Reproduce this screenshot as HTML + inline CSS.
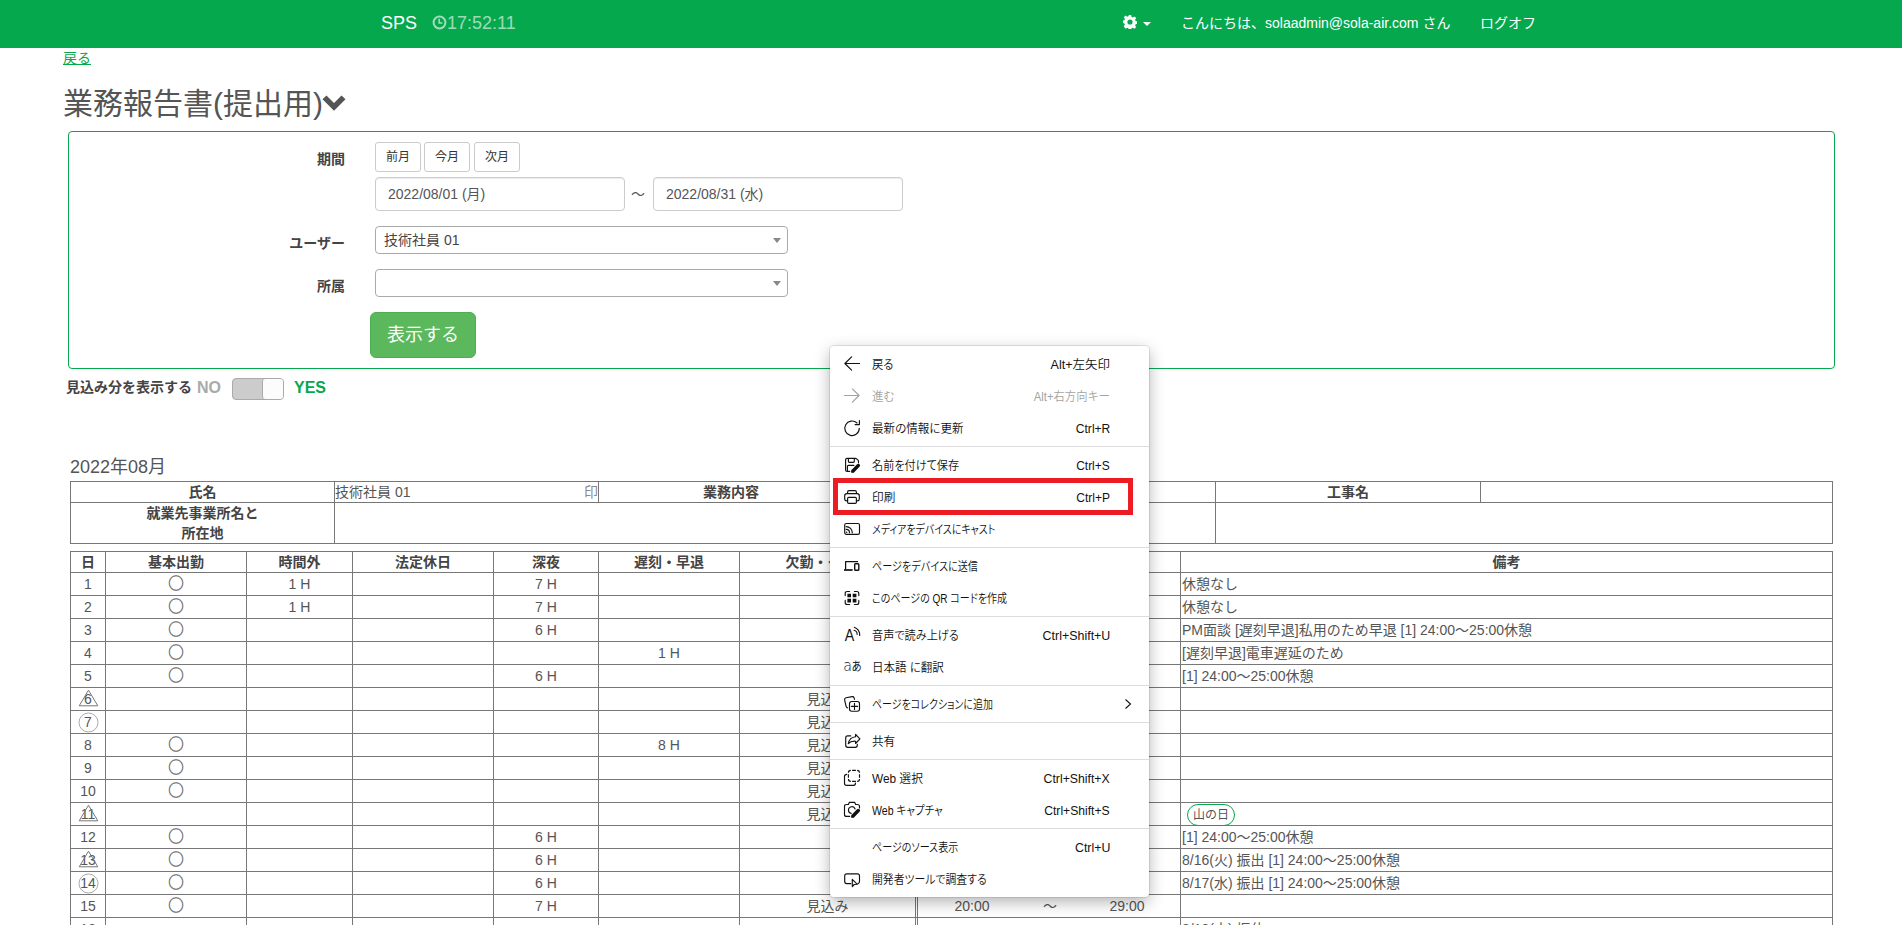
<!DOCTYPE html>
<html lang="ja">
<head>
<meta charset="utf-8">
<title>業務報告書(提出用)</title>
<style>
*{box-sizing:border-box}
html,body{margin:0;padding:0}
body{width:1902px;height:925px;overflow:hidden;position:relative;background:#fff;color:#555;
  font-family:"Liberation Sans","Noto Sans CJK JP",sans-serif;font-size:14px;line-height:20px}
.abs{position:absolute}
/* ---------- navbar ---------- */
#nav{position:absolute;left:0;top:0;width:1902px;height:48px;background:#06a84e}
#nav .brand{position:absolute;left:381px;top:13px;font-size:18px;line-height:20px;color:#fff}
#nav .clock{position:absolute;left:432px;top:15px;width:15px;height:15px}
#nav .time{position:absolute;left:447px;top:13px;font-size:18px;line-height:20px;color:rgba(255,255,255,.62)}
#nav .gear{position:absolute;left:1123px;top:15px;width:14px;height:14px}
#nav .caret{position:absolute;left:1143px;top:22px;width:0;height:0;border-top:4px solid #fff;border-left:4px solid transparent;border-right:4px solid transparent}
#nav .hello{position:absolute;left:1181px;top:13px;color:#fff;white-space:nowrap}
#nav .logoff{position:absolute;left:1480px;top:13px;color:#fff;white-space:nowrap}
/* ---------- heading ---------- */
#back{position:absolute;left:63px;top:48px;color:#06a84e;text-decoration:underline}
#title{position:absolute;left:63px;top:87px;margin:0;font-size:30px;line-height:33px;font-weight:normal;color:#555;white-space:nowrap}
#title svg{position:absolute;left:259px;top:7px}
/* ---------- search panel ---------- */
#panel{position:absolute;left:68px;top:131px;width:1767px;height:238px;border:1px solid #06a84e;border-radius:4px}
.lbl{position:absolute;width:120px;text-align:right;font-weight:bold;color:#444}
.btn-sm{position:absolute;top:142px;width:46px;height:30px;border:1px solid #ccc;border-radius:3px;background:#fff;color:#333;font-size:12px;line-height:28px;text-align:center}
.inp{position:absolute;top:177px;width:250px;height:34px;border:1px solid #ccc;border-radius:4px;background:#fff;padding:6px 12px;color:#555;line-height:20px;box-shadow:inset 0 1px 1px rgba(0,0,0,.075)}
.sel{position:absolute;left:375px;width:413px;height:28px;border:1px solid #aaa;border-radius:4px;background:#fff;padding-left:8px;line-height:26px;color:#444}
.sel i{position:absolute;right:6px;top:11px;width:0;height:0;border-top:5px solid #888;border-left:4px solid transparent;border-right:4px solid transparent}
#show{position:absolute;left:370px;top:312px;width:106px;height:46px;border:1px solid #4cae4c;border-radius:6px;background:#5cb85c;color:#fff;font-size:18px;line-height:44px;text-align:center}
/* ---------- toggle ---------- */
#tg-l{position:absolute;left:66px;top:377px;font-weight:bold;color:#444;white-space:nowrap}
#tg-no{position:absolute;left:197px;top:378px;font-weight:bold;font-size:16px;color:#aaa}
#tg-yes{position:absolute;left:294px;top:378px;font-weight:bold;font-size:16px;color:#06a84e}
#tg{position:absolute;left:232px;top:378px;width:52px;height:22px;border:1px solid #aaa;border-radius:4px;background:#ccc}
#tg b{position:absolute;right:0;top:0;width:21px;height:20px;background:#fcfcfc;border-left:1px solid #aaa;border-radius:3px}
/* ---------- tables ---------- */
#ym{position:absolute;left:70px;top:457px;font-size:18px;line-height:20px;color:#555;white-space:nowrap}
table{position:absolute;left:70px;width:1763px;border-collapse:separate;border-spacing:0;table-layout:fixed;border-right:1px solid #777;border-bottom:1px solid #777;color:#555}
th,td{border-left:1px solid #777;border-top:1px solid #777;padding:0;text-align:center;vertical-align:middle;line-height:20px;white-space:nowrap;overflow:hidden}
th{font-weight:bold;color:#444}
#t1{top:481px}
#t1 .r1 th,#t1 .r1 td{height:21px}
#t1 .r2 th,#t1 .r2 td{height:41px}
#t1 .nm{text-align:left;position:relative}
#t1 .in{position:absolute;right:0;top:0;color:#8a8a8a}
#t2{top:551px}
#t2 th{height:21px}
#t2 td{height:23px;line-height:21px;vertical-align:top;padding-top:1px}
#t2 .dbl{border-left:3px double #777}
#t2 .nb{border-left:0}
#t2 td.rm{text-align:left;padding-left:1px;position:relative;overflow:visible}
#t2 td.d{position:relative;overflow:visible}
#t2 .o{font-family:"Noto Sans CJK JP",sans-serif;font-size:15.5px;line-height:21px;height:21px;display:block;overflow:hidden;color:#666;-webkit-text-stroke:.35px #666;font-weight:400;position:relative;top:-2px}
.mk{position:absolute}
.mk.tri{left:6.5px;top:.5px;width:21px;height:18px}
.mk.cir{left:6.5px;top:.5px;width:21px;height:21px}
.hol{position:absolute;left:6px;top:1px;width:48px;height:22px;line-height:21px;z-index:2;border:1px solid #06a84e;border-radius:11px;text-align:center;font-size:12px}
/* ---------- context menu ---------- */
#menu{position:absolute;left:830px;top:346px;width:319px;height:551px;background:#fff;border-radius:4px;
  box-shadow:0 0 0 1px rgba(0,0,0,.09),0 5px 16px 0 rgba(0,0,0,.30);font-size:12px;line-height:32px;color:#111;
  font-family:"Liberation Sans","Noto Sans CJK JP",sans-serif}
#menu .mi{position:absolute;left:0;width:319px;height:32px;white-space:nowrap}
#menu .dis{color:#a3a3a3}
#menu .ic{position:absolute;left:14px;top:8px;width:16px;height:16px;overflow:visible}
#menu .ml{position:absolute;left:42px;top:1px;font-weight:350;transform-origin:0 50%;font-feature-settings:"palt"}
#menu .ms{position:absolute;right:39px;top:1px;font-weight:350;transform-origin:100% 50%}
#menu .chev{position:absolute;left:294px;top:10px;width:8px;height:12px}
#menu .sep{position:absolute;left:0;width:319px;height:1px;background:#dcdcdc}
#red{position:absolute;left:833px;top:478px;width:300px;height:37px;border:5px solid #ed1c24}
</style>
</head>
<body>
<div id="nav">
  <span class="brand">SPS</span>
  <svg class="clock" viewBox="0 0 15 15"><circle cx="7.5" cy="7.5" r="5.9" fill="none" stroke="rgba(255,255,255,.62)" stroke-width="2"/><path d="M7.2 3.8v4.200h3.200" fill="none" stroke="rgba(255,255,255,.62)" stroke-width="1.600"/></svg>
  <span class="time">17:52:11</span>
  <svg class="gear" viewBox="0 0 14 14"><path fill="#fff" fill-rule="evenodd" d="M5.8 0h2.4l.4 2 1.2.5 1.7-1.1 1.7 1.7-1.1 1.7.5 1.2 2 .4v2.4l-2 .4-.5 1.2 1.1 1.7-1.7 1.7-1.7-1.1-1.2.5-.4 2H5.8l-.4-2-1.2-.5-1.7 1.1L.8 11.300l1.100-1.700-.5-1.200-2-.4V5.600l2-.4.5-1.200L.8 2.300 2.500.6l1.700 1.100 1.200-.5zM7 4.400a2.600 2.600 0 1 0 0 5.200 2.600 2.600 0 0 0 0-5.200z"/></svg>
  <i class="caret"></i>
  <span class="hello">こんにちは、solaadmin@sola-air.com さん</span>
  <span class="logoff">ログオフ</span>
</div>

<a id="back">戻る</a>
<h2 id="title">業務報告書(提出用)<svg width="24" height="20" viewBox="0 0 24 20"><path d="M.5 5.250 4.500 1.400 12 9.050 19.500 1.400 23.500 5.250 12 16.800z" fill="#555"/></svg></h2>

<div id="panel"></div>
<div class="lbl" style="left:225px;top:149px">期間</div>
<div class="btn-sm" style="left:375px">前月</div>
<div class="btn-sm" style="left:424px">今月</div>
<div class="btn-sm" style="left:474px">次月</div>
<div class="inp" style="left:375px">2022/08/01 (月)</div>
<div class="abs" style="left:631px;top:184px">～</div>
<div class="inp" style="left:653px">2022/08/31 (水)</div>
<div class="lbl" style="left:225px;top:233px">ユーザー</div>
<div class="sel" style="top:226px">技術社員 01<i></i></div>
<div class="lbl" style="left:225px;top:276px">所属</div>
<div class="sel" style="top:269px"><i></i></div>
<div id="show">表示する</div>

<div id="tg-l">見込み分を表示する</div>
<div id="tg-no">NO</div>
<div id="tg"><b></b></div>
<div id="tg-yes">YES</div>

<!--TABLES-->
<div id="ym">2022年08月</div>
<table id="t1"><colgroup><col style="width:264px"><col style="width:264px"><col style="width:265px"><col style="width:352px"><col style="width:265px"><col style="width:352px"></colgroup>
<tr class="r1"><th>氏名</th><td class="nm">技術社員 01<span class="in">印</span></td><th>業務内容</th><td></td><th>工事名</th><td></td></tr>
<tr class="r2"><th>就業先事業所名と<br>所在地</th><td colspan="3"></td><td colspan="2"></td></tr>
</table>
<table id="t2"><colgroup><col style="width:35px"><col style="width:141px"><col style="width:106px"><col style="width:141px"><col style="width:105px"><col style="width:141px"><col style="width:176px"><col style="width:111px"><col style="width:48px"><col style="width:106px"><col style="width:652px"></colgroup>
<tr class="h"><th>日</th><th>基本出勤</th><th>時間外</th><th>法定休日</th><th>深夜</th><th>遅刻・早退</th><th>欠勤・その他</th><th class="dbl" colspan="3">勤務時間</th><th class="rm">備考</th></tr>
<tr><td class="d">1</td><td><span class="o">○</span></td><td>1 H</td><td></td><td>7 H</td><td></td><td></td><td class="dbl">20:00</td><td class="nb">～</td><td class="nb">29:00</td><td class="rm">休憩なし</td></tr>
<tr><td class="d">2</td><td><span class="o">○</span></td><td>1 H</td><td></td><td>7 H</td><td></td><td></td><td class="dbl">20:00</td><td class="nb">～</td><td class="nb">29:00</td><td class="rm">休憩なし</td></tr>
<tr><td class="d">3</td><td><span class="o">○</span></td><td></td><td></td><td>6 H</td><td></td><td></td><td class="dbl">20:00</td><td class="nb">～</td><td class="nb">28:00</td><td class="rm">PM面談 [遅刻早退]私用のため早退 [1] 24:00～25:00休憩</td></tr>
<tr><td class="d">4</td><td><span class="o">○</span></td><td></td><td></td><td></td><td>1 H</td><td></td><td class="dbl">10:00</td><td class="nb">～</td><td class="nb">18:00</td><td class="rm">[遅刻早退]電車遅延のため</td></tr>
<tr><td class="d">5</td><td><span class="o">○</span></td><td></td><td></td><td>6 H</td><td></td><td></td><td class="dbl">20:00</td><td class="nb">～</td><td class="nb">29:00</td><td class="rm">[1] 24:00～25:00休憩</td></tr>
<tr><td class="d"><svg class="mk tri" viewBox="0 0 21 18"><path d="M10.5 1.200 1.200 16.800h18.600z" fill="none" stroke="#777" stroke-width="1"/></svg>6</td><td></td><td></td><td></td><td></td><td></td><td>見込み</td><td class="dbl"></td><td class="nb"></td><td class="nb"></td><td class="rm"></td></tr>
<tr><td class="d"><svg class="mk cir" viewBox="0 0 21 21"><circle cx="10.500" cy="10.500" r="9.500" fill="none" stroke="#aaa" stroke-width="1"/></svg>7</td><td></td><td></td><td></td><td></td><td></td><td>見込み</td><td class="dbl"></td><td class="nb"></td><td class="nb"></td><td class="rm"></td></tr>
<tr><td class="d">8</td><td><span class="o">○</span></td><td></td><td></td><td></td><td>8 H</td><td>見込み</td><td class="dbl"></td><td class="nb"></td><td class="nb"></td><td class="rm"></td></tr>
<tr><td class="d">9</td><td><span class="o">○</span></td><td></td><td></td><td></td><td></td><td>見込み</td><td class="dbl"></td><td class="nb"></td><td class="nb"></td><td class="rm"></td></tr>
<tr><td class="d">10</td><td><span class="o">○</span></td><td></td><td></td><td></td><td></td><td>見込み</td><td class="dbl"></td><td class="nb"></td><td class="nb"></td><td class="rm"></td></tr>
<tr><td class="d"><svg class="mk tri" viewBox="0 0 21 18"><path d="M10.5 1.200 1.200 16.800h18.600z" fill="none" stroke="#777" stroke-width="1"/></svg>11</td><td></td><td></td><td></td><td></td><td></td><td>見込み</td><td class="dbl"></td><td class="nb"></td><td class="nb"></td><td class="rm"><span class="hol">山の日</span></td></tr>
<tr><td class="d">12</td><td><span class="o">○</span></td><td></td><td></td><td>6 H</td><td></td><td></td><td class="dbl">20:00</td><td class="nb">～</td><td class="nb">29:00</td><td class="rm">[1] 24:00～25:00休憩</td></tr>
<tr><td class="d"><svg class="mk tri" viewBox="0 0 21 18"><path d="M10.5 1.200 1.200 16.800h18.600z" fill="none" stroke="#777" stroke-width="1"/></svg>13</td><td><span class="o">○</span></td><td></td><td></td><td>6 H</td><td></td><td></td><td class="dbl">20:00</td><td class="nb">～</td><td class="nb">29:00</td><td class="rm">8/16(火) 振出 [1] 24:00～25:00休憩</td></tr>
<tr><td class="d"><svg class="mk cir" viewBox="0 0 21 21"><circle cx="10.500" cy="10.500" r="9.500" fill="none" stroke="#aaa" stroke-width="1"/></svg>14</td><td><span class="o">○</span></td><td></td><td></td><td>6 H</td><td></td><td></td><td class="dbl">20:00</td><td class="nb">～</td><td class="nb">29:00</td><td class="rm">8/17(水) 振出 [1] 24:00～25:00休憩</td></tr>
<tr><td class="d">15</td><td><span class="o">○</span></td><td></td><td></td><td>7 H</td><td></td><td>見込み</td><td class="dbl">20:00</td><td class="nb">～</td><td class="nb">29:00</td><td class="rm"></td></tr>
<tr><td class="d">16</td><td></td><td></td><td></td><td></td><td></td><td></td><td class="dbl"></td><td class="nb"></td><td class="nb"></td><td class="rm">8/13(土) 振休</td></tr>
</table>
<!--/TABLES-->
<!--MENU-->
<div id="menu">
<div class="mi" style="top:2px">
<svg class="ic" viewBox="0 0 16 16"><path fill="none" stroke="#111" stroke-width="1.15" stroke-linecap="round" stroke-linejoin="round" d="M15.600 7.500H0.900M7.600 0.800 0.900 7.500l6.700 6.700"/></svg>
<span class="ml" id="l0" style="transform:scaleX(0.9435)">戻る</span>
<span class="ms" id="s0" style="transform:scaleX(1.0421)">Alt+左矢印</span>
</div>
<div class="mi dis" style="top:34px">
<svg class="ic" viewBox="0 0 16 16"><path fill="none" stroke="#a3a3a3" stroke-width="1.15" stroke-linecap="round" stroke-linejoin="round" d="M0.400 7.500h14.700M8.400 0.800l6.700 6.700-6.700 6.700"/></svg>
<span class="ml" id="l1" style="transform:scaleX(0.9565)">進む</span>
<span class="ms" id="s1" style="transform:scaleX(0.9407)">Alt+右方向キー</span>
</div>
<div class="mi" style="top:66px">
<svg class="ic" viewBox="0 0 16 16"><path fill="none" stroke="#111" stroke-width="1.15" stroke-linecap="round" stroke-linejoin="round" d="M15.300 8.300A7.250 7.250 0 1 1 13.000 3.000M15.400 0.500v4.100h-4.300"/></svg>
<span class="ml" id="l2" style="transform:scaleX(0.9621)">最新の情報に更新</span>
<span class="ms" id="s2" style="transform:scaleX(1.0059)">Ctrl+R</span>
</div>
<div class="mi" style="top:103px">
<svg class="ic" viewBox="0 0 16 16"><path fill="none" stroke="#111" stroke-width="1.15" stroke-linecap="round" stroke-linejoin="round" d="M14.500 5.800V4.400Q14.500 3.700 14.000 3.200L12.600 1.800Q12.100 1.300 11.400 1.300H3.100Q1.600 1.300 1.600 2.800V12.900Q1.600 14.400 3.100 14.400H5.700M4.400 1.300V4.300Q4.400 5.300 5.400 5.300H9.300Q10.300 5.300 10.300 4.300V1.300M3.400 14.400V9.400Q3.400 8.400 4.400 8.400H9.800"/><path d="M9.000 13.900 14.300 8.600" fill="none" stroke="#111" stroke-width="3.500" stroke-linecap="round"/><path d="M7.000 15.800 7.900 12.500 10.400 15.000z" fill="#111"/></svg>
<span class="ml" id="l3" style="transform:scaleX(0.9287)">名前を付けて保存</span>
<span class="ms" id="s3" style="transform:scaleX(0.9941)">Ctrl+S</span>
</div>
<div class="mi" style="top:135px">
<svg class="ic" viewBox="0 0 16 16"><path fill="none" stroke="#111" stroke-width="1.15" stroke-linecap="round" stroke-linejoin="round" d="M3.600 4.600V3.000q0-1.400 1.400-1.400h6.000q1.400 0 1.400 1.400v1.600M3.600 11.800H2.800Q0.700 11.800 0.700 9.700V6.700Q0.700 4.600 2.800 4.600h10.400q2.100 0 2.100 2.100v3.000q0 2.100-2.100 2.100h-.8"/><rect fill="none" stroke="#111" stroke-width="1.15" stroke-linecap="round" stroke-linejoin="round" x="3.600" y="8.400" width="8.800" height="5.900" rx="1.100"/></svg>
<span class="ml" id="l4" style="transform:scaleX(0.9708)">印刷</span>
<span class="ms" id="s4" style="transform:scaleX(1.0000)">Ctrl+P</span>
</div>
<div class="mi" style="top:167px">
<svg class="ic" viewBox="0 0 16 16"><rect fill="none" stroke="#111" stroke-width="1.15" stroke-linecap="round" stroke-linejoin="round" x="0.700" y="2.500" width="14.800" height="10.900" rx="1.600"/><path fill="none" stroke="#111" stroke-width="1.15" stroke-linecap="round" stroke-linejoin="round" d="M2.200 5.600A6.100 6.100 0 0 1 8.300 11.700M2.200 8.400A3.300 3.300 0 0 1 5.500 11.700"/><circle cx="2.600" cy="11.300" r=".75" fill="#111"/></svg>
<span class="ml" id="l5" style="transform:scaleX(0.8309)">メディアをデバイスにキャスト</span>
</div>
<div class="mi" style="top:204px">
<svg class="ic" viewBox="0 0 16 16"><path fill="none" stroke="#111" stroke-width="1.250" stroke-linejoin="round" d="M14.000 3.600H1.600v8.000"/><path fill="none" stroke="#111" stroke-width="1.700" d="M0.000 12.000h8.600"/><rect fill="none" stroke="#111" stroke-width="1.400" x="10.700" y="5.800" width="4.100" height="6.500" rx=".8"/></svg>
<span class="ml" id="l6" style="transform:scaleX(0.8429)">ページをデバイスに送信</span>
</div>
<div class="mi" style="top:236px">
<svg class="ic" viewBox="0 0 16 16"><path fill="none" stroke="#111" stroke-width="1.15" stroke-linecap="round" stroke-linejoin="round" d="M5.600 1.500H3.200Q1.200 1.500 1.200 3.500v2.100M10.400 1.500h2.400q2.000 0 2.000 2.000v2.100M1.200 10.400v2.100q0 2.000 2.000 2.000h2.400M14.800 10.400v2.100q0 2.000-2.000 2.000h-2.400"/><path fill="#111" d="M3.400 3.800h3.600v3.500H3.400zM8.700 3.800h3.700v3.500H8.700zM3.400 8.800h3.600v3.600H3.400zM8.700 8.800h3.700v3.600H8.700z"/></svg>
<span class="ml" id="l7" style="transform:scaleX(0.8364)">このページの QR コードを作成</span>
</div>
<div class="mi" style="top:273px">
<svg class="ic" viewBox="0 0 16 16"><text x="0.700" y="13.700" font-family="Liberation Sans, sans-serif" font-size="16" fill="#111" textLength="9.500" lengthAdjust="spacingAndGlyphs">A</text><path fill="none" stroke="#111" stroke-width="1.1" stroke-linecap="round" stroke-linejoin="round" d="M10.050 3.200A4.050 4.050 0 0 1 13.100 7.400M10.300 0.200A8.500 8.500 0 0 1 15.700 8.400"/></svg>
<span class="ml" id="l8" style="transform:scaleX(0.9287)">音声で読み上げる</span>
<span class="ms" id="s8" style="transform:scaleX(1.0369)">Ctrl+Shift+U</span>
</div>
<div class="mi" style="top:305px">
<svg class="ic" viewBox="0 0 16 16"><text x="-0.700" y="12.000" font-family="DejaVu Sans, Liberation Sans, sans-serif" font-weight="200" font-size="16.400" fill="#111" textLength="8.700" lengthAdjust="spacingAndGlyphs">a</text><text x="7.500" y="12.100" font-family="Noto Sans CJK JP, sans-serif" font-weight="400" font-size="12.500" fill="#111" textLength="10.200" lengthAdjust="spacingAndGlyphs">あ</text></svg>
<span class="ml" id="l9" style="transform:scaleX(0.9600)">日本語 に翻訳</span>
</div>
<div class="mi" style="top:342px">
<svg class="ic" viewBox="0 0 16 16"><rect fill="none" stroke="#111" stroke-width="1.15" stroke-linecap="round" stroke-linejoin="round" x="5.500" y="5.500" width="10.000" height="9.700" rx="2.200"/><path fill="none" stroke="#111" stroke-width="1.15" stroke-linecap="round" stroke-linejoin="round" d="M10.500 7.300v6.200M7.400 10.400h6.200M10.500 3.300 10.000 1.600Q9.600 .3 8.200 .6L2.000 1.800Q.3 2.200 .6 3.800l1.500 6.600q.3 1.200 1.400 1.500"/></svg>
<span class="ml" id="l10" style="transform:scaleX(0.8308)">ページをコレクションに追加</span>
<svg class="chev" viewBox="0 0 8 12"><path d="M1.500 1.500 6.500 6 1.500 10.500" fill="none" stroke="#111" stroke-width="1.100"/></svg>
</div>
<div class="mi" style="top:379px">
<svg class="ic" viewBox="0 0 16 16"><path fill="none" stroke="#111" stroke-width="1.15" stroke-linecap="round" stroke-linejoin="round" d="M6.700 2.900H3.700q-2.000 0-2.000 2.000v7.400q0 2.000 2.000 2.000h7.600q2.000 0 2.000-2.000v-1.000"/><path fill="none" stroke="#111" stroke-width="1.15" stroke-linecap="round" stroke-linejoin="round" d="M11.600 1.400l4.300 4.500-4.300 4.600V8.200Q7.000 7.800 4.300 10.700 5.600 4.300 11.600 3.800z"/></svg>
<span class="ml" id="l11" style="transform:scaleX(0.9667)">共有</span>
</div>
<div class="mi" style="top:416px">
<svg class="ic" viewBox="0 0 16 16"><path fill="none" stroke="#111" stroke-width="1.15" stroke-linecap="butt" stroke-linejoin="round" d="M8.100 0.400H11.900M8.100 11.400H11.900M4.400 4.150V7.700M15.500 4.150V7.700M4.400 2.800A2.400 2.400 0 0 1 6.800 0.400M13.100 0.400A2.400 2.400 0 0 1 15.500 2.800M15.500 9.000A2.400 2.400 0 0 1 13.100 11.400M6.800 11.400A2.400 2.400 0 0 1 4.400 9.000"/><path fill="none" stroke="#111" stroke-width="1.15" stroke-linecap="round" stroke-linejoin="round" d="M2.700 4.400Q0.500 4.400 0.500 6.600V13.200Q0.500 15.400 2.700 15.400H9.600Q11.500 15.400 11.500 13.100"/></svg>
<span class="ml" id="l12" style="transform:scaleX(0.9846)">Web 選択</span>
<span class="ms" id="s12" style="transform:scaleX(1.0215)">Ctrl+Shift+X</span>
</div>
<div class="mi" style="top:448px">
<svg class="ic" viewBox="0 0 16 16"><path fill="none" stroke="#111" stroke-width="1.15" stroke-linecap="round" stroke-linejoin="round" d="M15.500 6.000V4.500Q15.500 2.450 13.500 2.450H11.700L10.600 0.300H5.400L4.400 2.450H2.500Q0.500 2.450 0.500 4.500V12.400Q0.500 14.400 2.500 14.400H5.700"/><path fill="none" stroke="#111" stroke-width="1.15" stroke-linecap="round" stroke-linejoin="round" d="M7.200 11.400A3.400 3.400 0 1 1 11.100 7.000"/><path d="M9.000 13.900 14.300 8.600" fill="none" stroke="#111" stroke-width="3.500" stroke-linecap="round"/><path d="M7.000 15.800 7.900 12.500 10.400 15.000z" fill="#111"/></svg>
<span class="ml" id="l13" style="transform:scaleX(0.8802)">Web キャプチャ</span>
<span class="ms" id="s13" style="transform:scaleX(1.0123)">Ctrl+Shift+S</span>
</div>
<div class="mi" style="top:485px">
<span class="ml" id="l14" style="transform:scaleX(0.8369)">ページのソース表示</span>
<span class="ms" id="s14" style="transform:scaleX(1.0294)">Ctrl+U</span>
</div>
<div class="mi" style="top:517px">
<svg class="ic" viewBox="0 0 16 16"><path fill="none" stroke="#111" stroke-width="1.15" stroke-linecap="round" stroke-linejoin="round" d="M6.800 12.600H2.700q-2.000 0-2.000-2.000V4.800q0-2.000 2.000-2.000h10.800q2.000 0 2.000 2.000v5.800q0 1.700-1.500 2.000"/><path fill="none" stroke="#111" stroke-width="1.15" stroke-linecap="round" stroke-linejoin="round" d="M8.300 8.300v7.300l1.900-2.100 3.200-.2z"/></svg>
<span class="ml" id="l15" style="transform:scaleX(0.9047)">開発者ツールで調査する</span>
</div>
<div class="sep" style="top:100px"></div>
<div class="sep" style="top:201px"></div>
<div class="sep" style="top:270px"></div>
<div class="sep" style="top:339px"></div>
<div class="sep" style="top:376px"></div>
<div class="sep" style="top:413px"></div>
<div class="sep" style="top:482px"></div>
</div>
<div id="red"></div>
<!--/MENU-->
</body>
</html>
